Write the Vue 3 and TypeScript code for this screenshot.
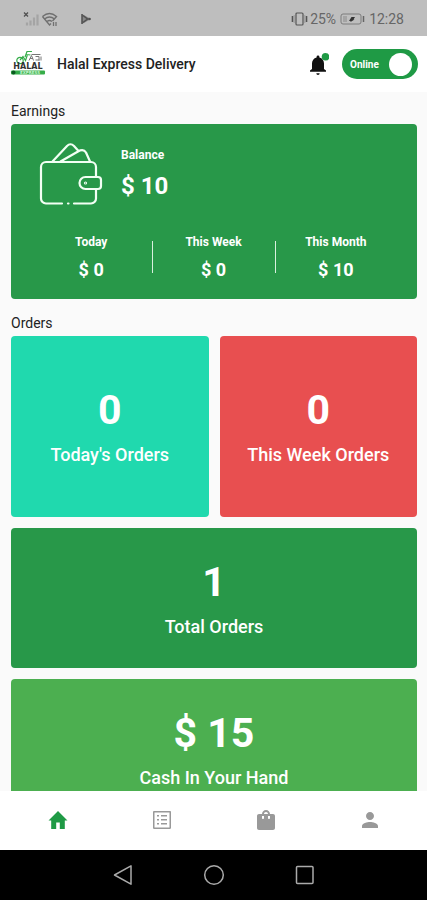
<script setup lang="ts">
import { ref } from 'vue'

interface Figure {
  label: string
  value: string
}
interface Tile extends Figure {
  tone: string
  wide: boolean
}
interface NavItem {
  name: string
  icon: string
}

const online = ref(true)
const active = ref('Home')

const periods: Figure[] = [
  { label: 'Today', value: '$ 0' },
  { label: 'This Week', value: '$ 0' },
  { label: 'This Month', value: '$ 10' },
]

const tiles: Tile[] = [
  { label: "Today's Orders", value: '0', tone: 'teal', wide: false },
  { label: 'This Week Orders', value: '0', tone: 'red', wide: false },
  { label: 'Total Orders', value: '1', tone: 'green', wide: true },
  { label: 'Cash In Your Hand', value: '$ 15', tone: 'lime', wide: true },
]

const nav: NavItem[] = [
  { name: 'Home', icon: 'M5.200 21v-8.500H2.500L12 3l9.500 9.500h-2.700V21h-5v-6.500h-3.600V21z' },
  {
    name: 'Orders',
    icon: 'M19.500 4.500v15h-15v-15h15m.6-1.500H3.900c-.5 0-.9.4-.9.9v16.200c0 .4.4.9.9.9h16.200c.4 0 .9-.5.9-.9V3.900c0-.5-.5-.9-.9-.9zM11 7h6v1.500h-6V7zm0 4h6v1.500h-6V11zm0 4h6v1.500h-6zM7 7h2v1.500H7zm0 4h2v1.500H7zm0 4h2v1.500H7z',
  },
  {
    name: 'Deliveries',
    icon: 'M19 6h-3c0-2.210-1.790-4-4-4S8 3.790 8 6H5c-1.100 0-2 .9-2 2v12c0 1.100.9 2 2 2h14c1.100 0 2-.9 2-2V8c0-1.100-.9-2-2-2zm-9 4c0 .55-.45 1-1 1s-1-.45-1-1V8h2v2zm2-6c1.100 0 2 .9 2 2h-4c0-1.100.9-2 2-2zm4 6c0 .55-.45 1-1 1s-1-.45-1-1V8h2v2z',
  },
  {
    name: 'Profile',
    icon: 'M12 12c2.210 0 4-1.790 4-4s-1.790-4-4-4-4 1.790-4 4 1.790 4 4 4zm0 2c-2.670 0-8 1.340-8 4v2h16v-2c0-2.660-5.330-4-8-4z',
  },
]
</script>

<template>
  <div class="screen">
    <div class="status">
      <div class="status-left">
        <svg width="36" height="16" viewBox="0 0 36 16" aria-hidden="true">
          <path d="M2 1.500l4 4M6 1.500l-4 4" stroke="#505050" stroke-width="1.300" />
          <path d="M5 14.500v-3M8.500 14.500v-5M12 14.500v-8M15.500 14.500v-11" stroke="#a4a4a4" stroke-width="2.200" />
          <g fill="none" stroke="#707070" stroke-width="1.400">
            <path d="M20.500 5.500q7-6 14 0L30.500 10M20.500 5.500L27.500 14l1.500-1.500" />
            <path d="M22.500 8q5-4 10 0M25 10.500q2.500-2 5 0" />
          </g>
          <path d="M31.500 11v4M34 11v4" stroke="#707070" stroke-width="1.300" />
        </svg>
        <svg width="12" height="12" viewBox="0 0 12 12" aria-hidden="true">
          <path d="M2 1l9 5-9 5z" fill="#888" />
          <path d="M2 1v10M3 2.500L7.500 6 3 9.500" fill="none" stroke="#505050" stroke-width="1.500" />
          <circle cx="9.500" cy="6" r="1.300" fill="#505050" />
        </svg>
      </div>
      <div class="status-right">
        <svg width="17" height="16" viewBox="0 0 17 16" fill="none" stroke="#555" aria-hidden="true">
          <rect x="5" y="2" width="7" height="12" rx="1" stroke-width="1.200" />
          <path d="M1.500 5v6M15.500 5v6" stroke-width="1.600" />
          <path d="M3.200 4v8M13.800 4v8" stroke="#999" stroke-width="1" />
        </svg>
        <span>25%</span>
        <svg class="battery" width="25" height="12" viewBox="0 0 25 12" aria-hidden="true">
          <rect x="1" y="1" width="20" height="10" rx="2" fill="none" stroke="#7c7c7c" />
          <path d="M3 3h4v6H3z" fill="#a4a4a4" />
          <path d="M9 8l2.500-4H15l-1.500 2.500h1L10.500 9V8z" fill="#333" />
          <path d="M23.500 3v6" stroke="#666" stroke-width="1.500" />
        </svg>
        <span>12:28</span>
      </div>
    </div>

    <header class="header">
      <svg class="logo" width="36" height="28" viewBox="0 0 36 28" role="img" aria-label="Halal Express">
        <g fill="none" stroke="#35ad49" stroke-width="1.200">
          <circle cx="10" cy="10.500" r="3.200" />
          <path d="M10 10l3-3.500 2.500 4 2-6M15 7l2-5.500h5M16.500 4.500l4 .5" />
        </g>
        <g fill="none" stroke="#777" stroke-width="1">
          <path d="M19 10.500l2.500-5 2 5M20 8.500h3M21.500 4.500h9M25.500 6.500h3.500v4M31 6.500v4M25.500 10h4" />
        </g>
        <text x="18" y="19" text-anchor="middle" class="logo-name">HALAL</text>
        <rect x="1" y="20.500" width="34" height="4" rx="1" fill="#35ad49" />
        <circle cx="3.500" cy="22.500" r="2" fill="#0c5a20" />
        <text x="20" y="24" text-anchor="middle" class="logo-sub">EXPRESS</text>
      </svg>
      <h1>Halal Express Delivery</h1>
      <button class="bell" type="button" aria-label="Notifications">
        <svg width="22" height="24" viewBox="0 0 22 24" aria-hidden="true">
          <path
            fill="#111"
            d="M9.300 21.200h3.400a1.700 1.700 0 0 1-3.400 0zM17 17V11.500c0-3-1.700-5.300-4.600-6.100V4.800a1.400 1.400 0 0 0-2.800 0v.6C6.700 6.200 5 8.500 5 11.500V17l-2 1.500v1.300h16v-1.300z"
          />
          <circle cx="18.500" cy="4.800" r="3.800" fill="#1f9a45" />
        </svg>
      </button>
      <label class="switch" :class="{ off: !online }">
        <input v-model="online" type="checkbox" role="switch" />
        <span>{{ online ? 'Online' : 'Offline' }}</span>
        <i class="knob"></i>
      </label>
    </header>

    <main class="content">
      <h2>Earnings</h2>
      <section class="earnings">
        <div class="balance">
          <svg
            width="64"
            height="64"
            viewBox="0 0 64 64"
            fill="none"
            stroke="#f2fff4"
            stroke-width="2.200"
            stroke-linecap="round"
            stroke-linejoin="round"
            aria-hidden="true"
          >
            <path d="M23 61.500H7a5 5 0 0 1-5-5V25a5 5 0 0 1 5-5h45a5 5 0 0 1 5 5v10M57 47v9.500a5 5 0 0 1-5 5H35" />
            <path d="M29 61.500h.5" />
            <path d="M46.500 35H59a3 3 0 0 1 3 3v6a3 3 0 0 1-3 3H46.500a6 6 0 0 1 0-12z" />
            <circle cx="46.500" cy="41" r=".5" />
            <path d="M13.500 19.500L28 4q3.500-3.500 7 0l4.500 5M21.500 19.500L39 9.500q5.500-3 8 1l4 9" />
          </svg>
          <dl class="balance-text">
            <dt>Balance</dt>
            <dd>$ 10</dd>
          </dl>
        </div>
        <dl class="periods">
          <div v-for="p in periods" :key="p.label" class="period">
            <dt>{{ p.label }}</dt>
            <dd>{{ p.value }}</dd>
          </div>
        </dl>
      </section>

      <h2 class="orders-title">Orders</h2>
      <section class="tiles">
        <article v-for="t in tiles" :key="t.label" class="tile" :class="[t.tone, { wide: t.wide }]">
          <strong>{{ t.value }}</strong>
          <span>{{ t.label }}</span>
        </article>
      </section>
    </main>

    <nav class="tabs" aria-label="Main">
      <button
        v-for="n in nav"
        :key="n.name"
        type="button"
        :aria-label="n.name"
        :class="{ active: active === n.name }"
        @click="active = n.name"
      >
        <svg width="24" height="24" viewBox="0 0 24 24" aria-hidden="true"><path :d="n.icon" /></svg>
      </button>
    </nav>

    <div class="system">
      <button type="button" aria-label="Back">
        <svg width="22" height="22" viewBox="0 0 22 22"><path d="M19 1.800v18.400L2.500 11z" /></svg>
      </button>
      <button type="button" aria-label="Home screen">
        <svg width="22" height="22" viewBox="0 0 22 22"><circle cx="11" cy="11" r="9.300" /></svg>
      </button>
      <button type="button" aria-label="Recent apps">
        <svg width="22" height="22" viewBox="0 0 22 22"><rect x="2.500" y="2.500" width="16.500" height="17" rx="1" /></svg>
      </button>
    </div>
  </div>
</template>

<style>
body {
  margin: 0;
}
</style>

<style scoped>
.screen {
  height: 100vh;
  display: flex;
  flex-direction: column;
  background: #fafafa;
  font-family: Roboto, 'Liberation Sans', sans-serif;
  color: #222;
}
.screen * {
  box-sizing: border-box;
}
button {
  border: 0;
  padding: 0;
  background: none;
  display: flex;
  align-items: center;
  justify-content: center;
  cursor: pointer;
}
svg {
  display: block;
  flex: none;
}
h1,
h2,
dl,
dd {
  margin: 0;
}
.status {
  flex: none;
  height: 36px;
  padding: 2px 23px 0 22px;
  display: flex;
  align-items: center;
  justify-content: space-between;
  background: #bebebe;
  color: #666;
  font-size: 14px;
}
.status-left {
  display: flex;
  align-items: center;
  gap: 22px;
}
.status-right {
  display: flex;
  align-items: center;
  gap: 2px;
}
.battery {
  margin: 0 2px;
}
.header {
  flex: none;
  height: 56px;
  padding: 0 9px 0 10px;
  display: flex;
  align-items: center;
  background: #fff;
}
.logo-name {
  font: bold 8px 'DejaVu Sans', sans-serif;
  fill: #333;
}
.logo-sub {
  font: bold 4px 'DejaVu Sans', sans-serif;
  fill: #c8f5d0;
}
h1 {
  flex: 1;
  margin-left: 11px;
  font-size: 14px;
  line-height: 20px;
  font-weight: 500;
}
.bell {
  margin-right: 13px;
}
.switch {
  width: 76px;
  height: 30px;
  padding: 0 6px 0 8px;
  border-radius: 15px;
  display: flex;
  align-items: center;
  justify-content: space-between;
  background: #1f9a45;
  color: #fff;
  font-size: 10px;
  font-weight: 700;
  position: relative;
  cursor: pointer;
}
.switch.off {
  background: #999;
  flex-direction: row-reverse;
}
.switch input {
  position: absolute;
  inset: 0;
  width: 100%;
  height: 100%;
  margin: 0;
  opacity: 0;
  cursor: pointer;
}
.knob {
  width: 23px;
  height: 23px;
  border-radius: 50%;
  background: #fff;
}
.content {
  flex: 1;
  min-height: 0;
  overflow: hidden;
  padding: 9px 10px 11px 11px;
}
h2 {
  font-size: 14px;
  line-height: 20px;
  font-weight: 400;
  margin-bottom: 3px;
}
.orders-title {
  margin-top: 14px;
}
.earnings {
  padding: 18px 20px 16px 19px;
  border-radius: 4px;
  background: #289849;
  color: #fff;
  font-weight: 700;
}
.balance {
  display: flex;
  gap: 18px;
  padding-left: 9px;
}
.balance-text {
  padding-top: 5px;
}
dt {
  font-size: 12px;
  line-height: 16px;
}
.balance-text dd {
  margin-top: 7px;
  font-size: 24px;
  line-height: 32px;
}
.periods {
  margin-top: 28px;
  display: grid;
  grid-template-columns: repeat(3, 1fr);
  text-align: center;
}
.period {
  position: relative;
}
.period + .period::before {
  content: '';
  position: absolute;
  left: 0;
  top: 7px;
  width: 1px;
  height: 32px;
  background: #d9f0de;
}
.period dd {
  margin-top: 7px;
  font-size: 18px;
  line-height: 26px;
}
.tiles {
  display: grid;
  grid-template-columns: 1fr 1fr;
  gap: 11px;
}
.tile {
  min-height: 181px;
  border-radius: 4px;
  display: flex;
  flex-direction: column;
  align-items: center;
  justify-content: center;
  gap: 9px;
  color: #fff;
}
.tile.wide {
  grid-column: 1 / -1;
  min-height: 140px;
}
.tile strong {
  font-size: 41px;
  line-height: 48px;
  font-weight: 700;
}
.tile span {
  font-size: 18px;
  line-height: 24px;
  font-weight: 500;
}
.teal {
  background: #20d9ae;
}
.red {
  background: #e84f50;
}
.green {
  background: #289849;
}
.lime {
  background: #4caf50;
}
.tabs {
  flex: none;
  height: 59px;
  padding: 0 5px 2px 6px;
  display: grid;
  grid-template-columns: repeat(4, 1fr);
  background: #fff;
}
.tabs svg {
  fill: #999;
}
.tabs .active svg {
  fill: #1f9a45;
}
.system {
  flex: none;
  height: 50px;
  display: flex;
  align-items: center;
  justify-content: center;
  gap: 69px;
  background: #000;
}
.system svg {
  fill: none;
  stroke: #aaa;
  stroke-width: 1.5;
  stroke-linejoin: round;
}
</style>
